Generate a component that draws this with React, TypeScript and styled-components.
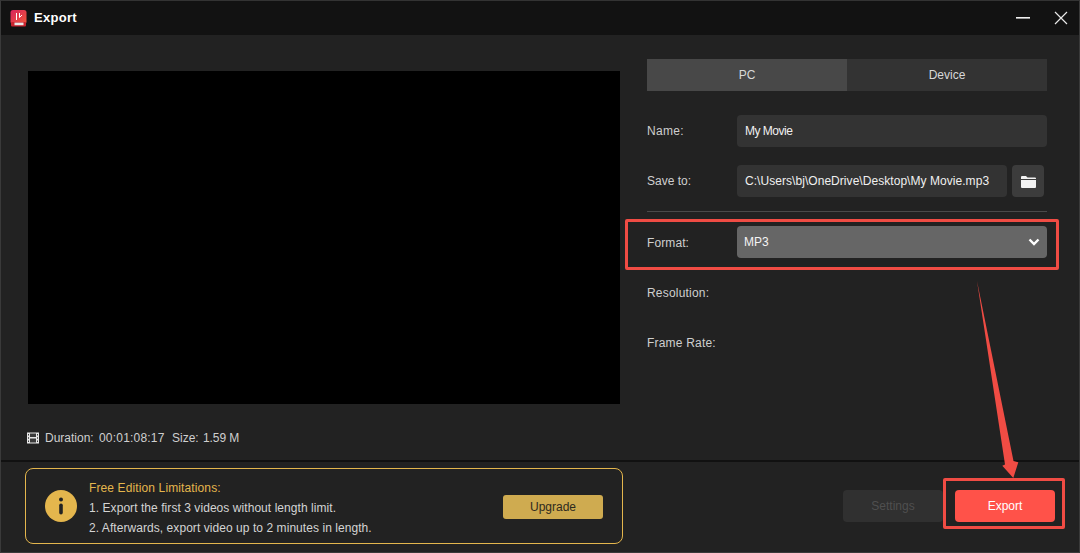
import React from "react";
import styled, { createGlobalStyle } from "styled-components";

const Global = createGlobalStyle`
  html, body { margin: 0; padding: 0; background: #222; }
  * { box-sizing: border-box; }
`;

const Window = styled.div`
  width: 1080px; height: 553px; position: relative; overflow: hidden;
  background: #222222; border: 1px solid #3a3a3a; border-top-color: #333;
  font-family: "Liberation Sans", Arial, sans-serif; font-size: 12px; color: #d6d6d6;
  display: flex; flex-direction: column;
`;
const TitleBar = styled.header`
  height: 34px; flex: none; background: #121212; display: flex; align-items: center;
  padding-left: 9px; color: #fff;
`;
const AppTitle = styled.span`
  font-weight: 700; font-size: 13px; margin-left: 7px; margin-top: -1px; flex: 1; letter-spacing: 0.3px;
`;
const WinButton = styled.button<{ $mr: number }>`
  width: 36px; height: 34px; padding: 0; border: 0; background: none; display: flex;
  align-items: center; justify-content: center; margin-right: ${(p) => p.$mr}px;
`;
const Body = styled.div`
  height: 425px; flex: none; display: flex; padding-left: 27px;
`;
const Left = styled.section`
  width: 592px; flex: none; padding-top: 36px; display: flex; flex-direction: column;
`;
const Preview = styled.div`
  width: 592px; height: 333px; background: #000;
`;
const Meta = styled.div`
  display: flex; align-items: center; margin-top: 27px; height: 14px; color: #cfcfcf; margin-left: -1px;
`;
const MetaText = styled.span<{ $w: number; $sp?: number }>`
  width: ${(p) => p.$w}px; flex: none; letter-spacing: ${(p) => p.$sp ?? 0}px; white-space: nowrap;
`;
const Right = styled.section`
  width: 400px; flex: none; margin-left: 27px; padding-top: 24px; display: flex; flex-direction: column;
`;
const Tabs = styled.div`
  display: flex; height: 32px; margin-bottom: 24px;
`;
const Tab = styled.div<{ $on?: boolean }>`
  flex: 1; display: flex; align-items: center; justify-content: center;
  background: ${(p) => (p.$on ? "#484848" : "#333333")}; color: #d8d8d8;
`;
const Row = styled.div<{ $mb: number }>`
  display: flex; align-items: center; height: 32px; margin-bottom: ${(p) => p.$mb}px;
`;
const Label = styled.label<{ $sp?: number; $down?: number }>`
  width: 90px; flex: none; color: #cfcfcf; letter-spacing: ${(p) => p.$sp ?? 0}px;
  padding-top: ${(p) => p.$down ?? 0}px;
`;
const Field = styled.div<{ $sp: number }>`
  flex: 1; height: 32px; background: #333333; border-radius: 4px; display: flex;
  align-items: center; padding-left: 8px; color: #f0f0f0; letter-spacing: ${(p) => p.$sp}px;
`;
const FolderButton = styled.button`
  width: 32px; height: 32px; margin-left: 5px; padding: 0; border: 0; border-radius: 4px;
  background: #3c3c3c; display: flex; align-items: center; justify-content: center; flex: none;
  margin-right: 3px;
`;
const Divider = styled.div`
  height: 1px; background: #4a4a4a; margin-bottom: 14px;
`;
const Select = styled.div`
  flex: 1; height: 32px; background: #666666; border-radius: 4px; display: flex;
  align-items: center; justify-content: space-between; padding: 0 7px 0 7px; color: #f4f4f4;
`;
const PlainRow = styled.div<{ $mt: number }>`
  height: 14px; line-height: 14px; margin-top: ${(p) => p.$mt}px; color: #cfcfcf; letter-spacing: 0.2px;
`;
const Footer = styled.footer`
  flex: 1; border-top: 2px solid #111; display: flex; align-items: flex-start;
  padding: 6px 0 0 24px;
`;
const Notice = styled.div`
  width: 598px; height: 76px; border: 1px solid #e4b64d; border-radius: 8px; display: flex;
  align-items: center; padding: 0 19px;
`;
const NoticeText = styled.div`
  flex: 1; margin-left: 12px; padding-top: 4px; line-height: 20px; color: #d4d4d4; letter-spacing: 0.06px;
`;
const NoticeHead = styled.div`
  color: #e4b64d; letter-spacing: 0.12px;
`;
const Upgrade = styled.button`
  width: 100px; height: 24px; border: 0; border-radius: 3px; background: #cfab50; color: #2e2a1e;
  font: 12px "Liberation Sans", Arial, sans-serif; padding: 0; margin-top: 1px;
`;
const Actions = styled.div`
  display: flex; margin-left: 220px; margin-top: 22px;
`;
const ActionButton = styled.button<{ $primary?: boolean }>`
  width: 100px; height: 32px; border: 0; border-radius: 4px; padding: 0;
  font: 12px "Liberation Sans", Arial, sans-serif;
  background: ${(p) => (p.$primary ? "#ff5249" : "#303030")};
  color: ${(p) => (p.$primary ? "#fff" : "#4f4f4f")};
  margin-left: ${(p) => (p.$primary ? 12 : 0)}px;
`;
const Highlight = styled.div<{ $x: number; $y: number; $w: number; $h: number }>`
  position: absolute; left: ${(p) => p.$x}px; top: ${(p) => p.$y}px;
  width: ${(p) => p.$w}px; height: ${(p) => p.$h}px;
  border: 3px solid #f04c44; border-radius: 2px; pointer-events: none;
`;
const ArrowSvg = styled.svg`
  position: absolute; left: 960px; top: 270px; pointer-events: none;
`;

const Logo = () => (
  <svg width="17" height="17" viewBox="0 0 17 17">
    <defs>
      <linearGradient id="lg" x1="0" y1="0" x2="1" y2="1">
        <stop offset="0" stopColor="#d8245c" />
        <stop offset="1" stopColor="#f0573a" />
      </linearGradient>
    </defs>
    <rect x="0.5" y="0" width="16" height="14" rx="2.5" fill="url(#lg)" />
    <rect x="1" y="12" width="15" height="4.5" rx="1" fill="#c8242f" />
    <rect x="4.5" y="12.6" width="9" height="2.6" fill="#e8e8e8" />
    <path d="M6.5 3v7M9.5 3v4.5l2.5-2.5" stroke="#fff" strokeWidth="1" fill="none" />
  </svg>
);

const FilmIcon = () => (
  <svg width="12" height="12" viewBox="0 0 12 12" style={{ marginRight: 6 }}>
    <rect x="0" y="0.5" width="12" height="11" fill="#e6e6e6" />
    <rect x="3" y="1.5" width="6" height="3.5" fill="#3a3a3a" />
    <rect x="3" y="6.5" width="6" height="4" fill="#3a3a3a" />
    <path d="M1 2h1v1.5H1zM1 5.2h1v1.5H1zM1 8.5h1V10H1zM10 2h1v1.5h-1zM10 5.2h1v1.5h-1zM10 8.5h1V10h-1z" fill="#3a3a3a" />
  </svg>
);

export default function App() {
  return (
    <Window>
      <Global />
      <TitleBar>
        <Logo />
        <AppTitle>Export</AppTitle>
        <WinButton $mr={2} aria-label="Minimize">
          <svg width="14" height="2"><rect width="14" height="1.6" fill="#f0f0f0" /></svg>
        </WinButton>
        <WinButton $mr={0} aria-label="Close">
          <svg width="14" height="14" viewBox="0 0 14 14">
            <path d="M1 1l12 12M13 1L1 13" stroke="#e8e8e8" strokeWidth="1.2" />
          </svg>
        </WinButton>
      </TitleBar>
      <Body>
        <Left>
          <Preview />
          <Meta>
            <FilmIcon />
            <MetaText $w={54}>Duration:</MetaText>
            <MetaText $w={73} $sp={0.2}>00:01:08:17</MetaText>
            <MetaText $w={31}>Size:</MetaText>
            <MetaText $w={40} $sp={-0.1}>1.59 M</MetaText>
          </Meta>
        </Left>
        <Right>
          <Tabs>
            <Tab $on>PC</Tab>
            <Tab>Device</Tab>
          </Tabs>
          <Row $mb={18}>
            <Label $sp={0.3}>Name:</Label>
            <Field $sp={-0.5}>My Movie</Field>
          </Row>
          <Row $mb={14}>
            <Label>Save to:</Label>
            <Field $sp={0.05}>C:\Users\bj\OneDrive\Desktop\My Movie.mp3</Field>
            <FolderButton aria-label="Browse">
              <svg width="15" height="13" viewBox="0 0 15 13">
                <path d="M0 2a1 1 0 0 1 1-1h4l1.5 1.5H14a1 1 0 0 1 1 1V4H0z" fill="#f2f2f2" />
                <path d="M0 5h15v7a1 1 0 0 1-1 1H1a1 1 0 0 1-1-1z" fill="#f2f2f2" />
              </svg>
            </FolderButton>
          </Row>
          <Divider />
          <Row $mb={0}>
            <Label $sp={0.1} $down={2}>Format:</Label>
            <Select>
              MP3
              <svg width="12" height="8" viewBox="0 0 12 8">
                <path d="M1.5 1.5L6 6l4.5-4.5" stroke="#fff" strokeWidth="2.4" fill="none" />
              </svg>
            </Select>
          </Row>
          <PlainRow $mt={28}>Resolution:</PlainRow>
          <PlainRow $mt={36}>Frame Rate:</PlainRow>
        </Right>
      </Body>
      <Footer>
        <Notice>
          <svg width="32" height="32" viewBox="0 0 32 32">
            <circle cx="16" cy="16" r="16" fill="#e4b64d" />
            <circle cx="16" cy="9.5" r="2" fill="#222" />
            <rect x="14.2" y="13.5" width="3.6" height="11" rx="1.8" fill="#222" />
          </svg>
          <NoticeText>
            <NoticeHead>Free Edition Limitations:</NoticeHead>
            <div>1. Export the first 3 videos without length limit.</div>
            <div>2. Afterwards, export video up to 2 minutes in length.</div>
          </NoticeText>
          <Upgrade>Upgrade</Upgrade>
        </Notice>
        <Actions>
          <ActionButton>Settings</ActionButton>
          <ActionButton $primary>Export</ActionButton>
        </Actions>
      </Footer>
      <Highlight $x={624} $y={218} $w={434} $h={51} />
      <Highlight $x={942} $y={477} $w={122} $h={51} />
      <ArrowSvg width="70" height="215" viewBox="0 0 70 215">
        <path d="M16 10 L52.5 190 L57.3 191.3 L52.3 207 L41.3 194.7 L44 193.5 Z" fill="#f04c44" />
      </ArrowSvg>
    </Window>
  );
}
